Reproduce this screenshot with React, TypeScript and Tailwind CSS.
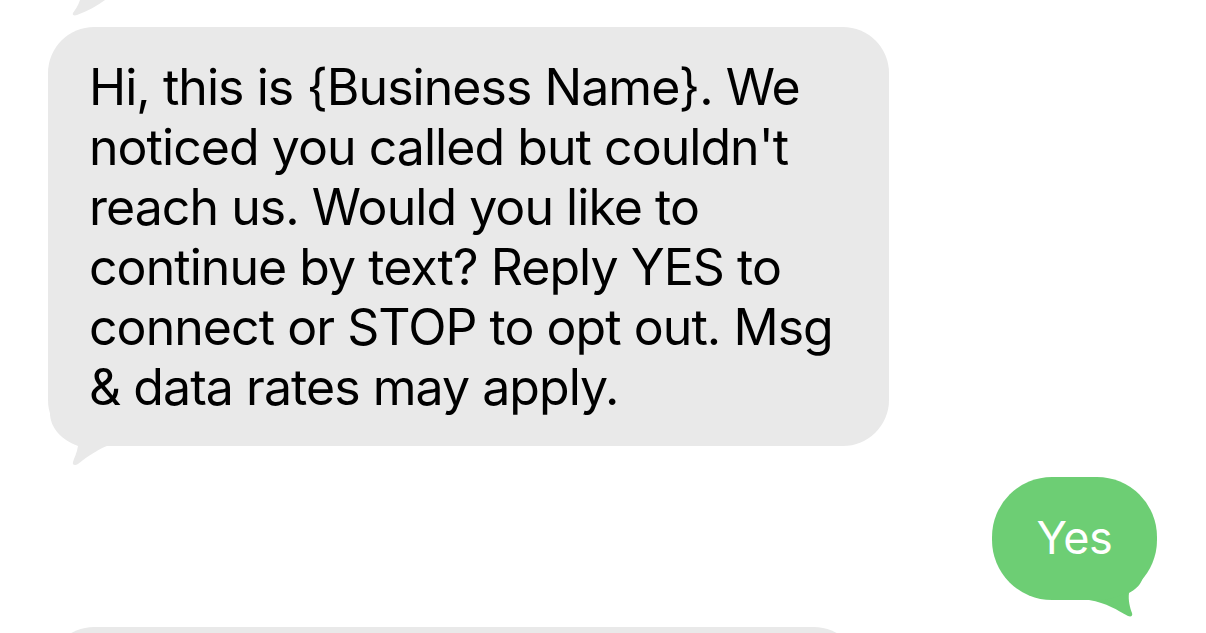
const lines = [
  "Hi, this is {Business Name}. We",
  "noticed you called but couldn't",
  "reach us. Would you like to",
  "continue by text? Reply YES to",
  "connect or STOP to opt out. Msg",
  "& data rates may apply.",
];

const font = { fontFamily: "Inter, 'Liberation Sans', sans-serif" };

// tail hanging off the bottom-left of an incoming bubble
const IncomingTail = () => (
  <svg className="absolute left-0 bottom-[-20px]" width="100" height="68" viewBox="0 0 100 68">
    <path
      d="M2 0 L2 15 C2 30 14 42 30 48 C29 55 26 60 25 64 C24 67 27 68 30 66 C40 58 52 50 62 47 L100 47 L100 0 Z"
      fill="#e9e9e9"
    />
  </svg>
);

// tail hanging off the bottom-right of an outgoing bubble
const OutgoingTail = () => (
  <svg className="absolute right-0 bottom-[-20px]" width="90" height="60" viewBox="0 0 90 60">
    <path
      d="M60 0 L76 0 C80 16 74 27 62 33 C61 40 63 48 65 53 C66 56 64 57 61 56 C50 50 40 43 22 40 L0 40 L0 0 Z"
      fill="#6dce74"
    />
  </svg>
);

export default function App() {
  return (
    <div className="relative h-[633px] w-[1206px] overflow-hidden bg-white" style={font}>
      {/* tail of the previous message, mostly scrolled off */}
      <svg className="absolute left-0 top-0" width="120" height="20" viewBox="0 0 120 20">
        <path d="M80 0 C78 6 75 10 73 13 C72 15 74 16 77 15 C88 11 97 6 105 0 Z" fill="#e9e9e9" />
      </svg>

      <div className="flex flex-col pt-[27px]">
        <div className="relative ml-[48px] w-[841px]">
          <div className="relative z-10 rounded-[46px] bg-[#e9e9e9] pl-[41px] pr-[20px] pt-[30px] pb-[29px] text-[50px] leading-[60px] tracking-[-0.95px] text-black">
            {lines.map((l) => (
              <div key={l} className="whitespace-nowrap">
                {l}
              </div>
            ))}
          </div>
          <IncomingTail />
        </div>

        <div className="mt-[31px] flex justify-end pr-[49px]">
          <div className="relative">
            <div className="relative z-10 flex h-[123px] w-[165px] items-center justify-center rounded-[60px] bg-[#6dce74] pb-[2px] text-[45px] tracking-[-0.4px] text-white">
              Yes
            </div>
            <OutgoingTail />
          </div>
        </div>

        {/* next incoming message peeking in at the bottom */}
        <div className="ml-[48px] mt-[27px] h-[120px] w-[812px] rounded-[46px] bg-[#e9e9e9]" />
      </div>
    </div>
  );
}
